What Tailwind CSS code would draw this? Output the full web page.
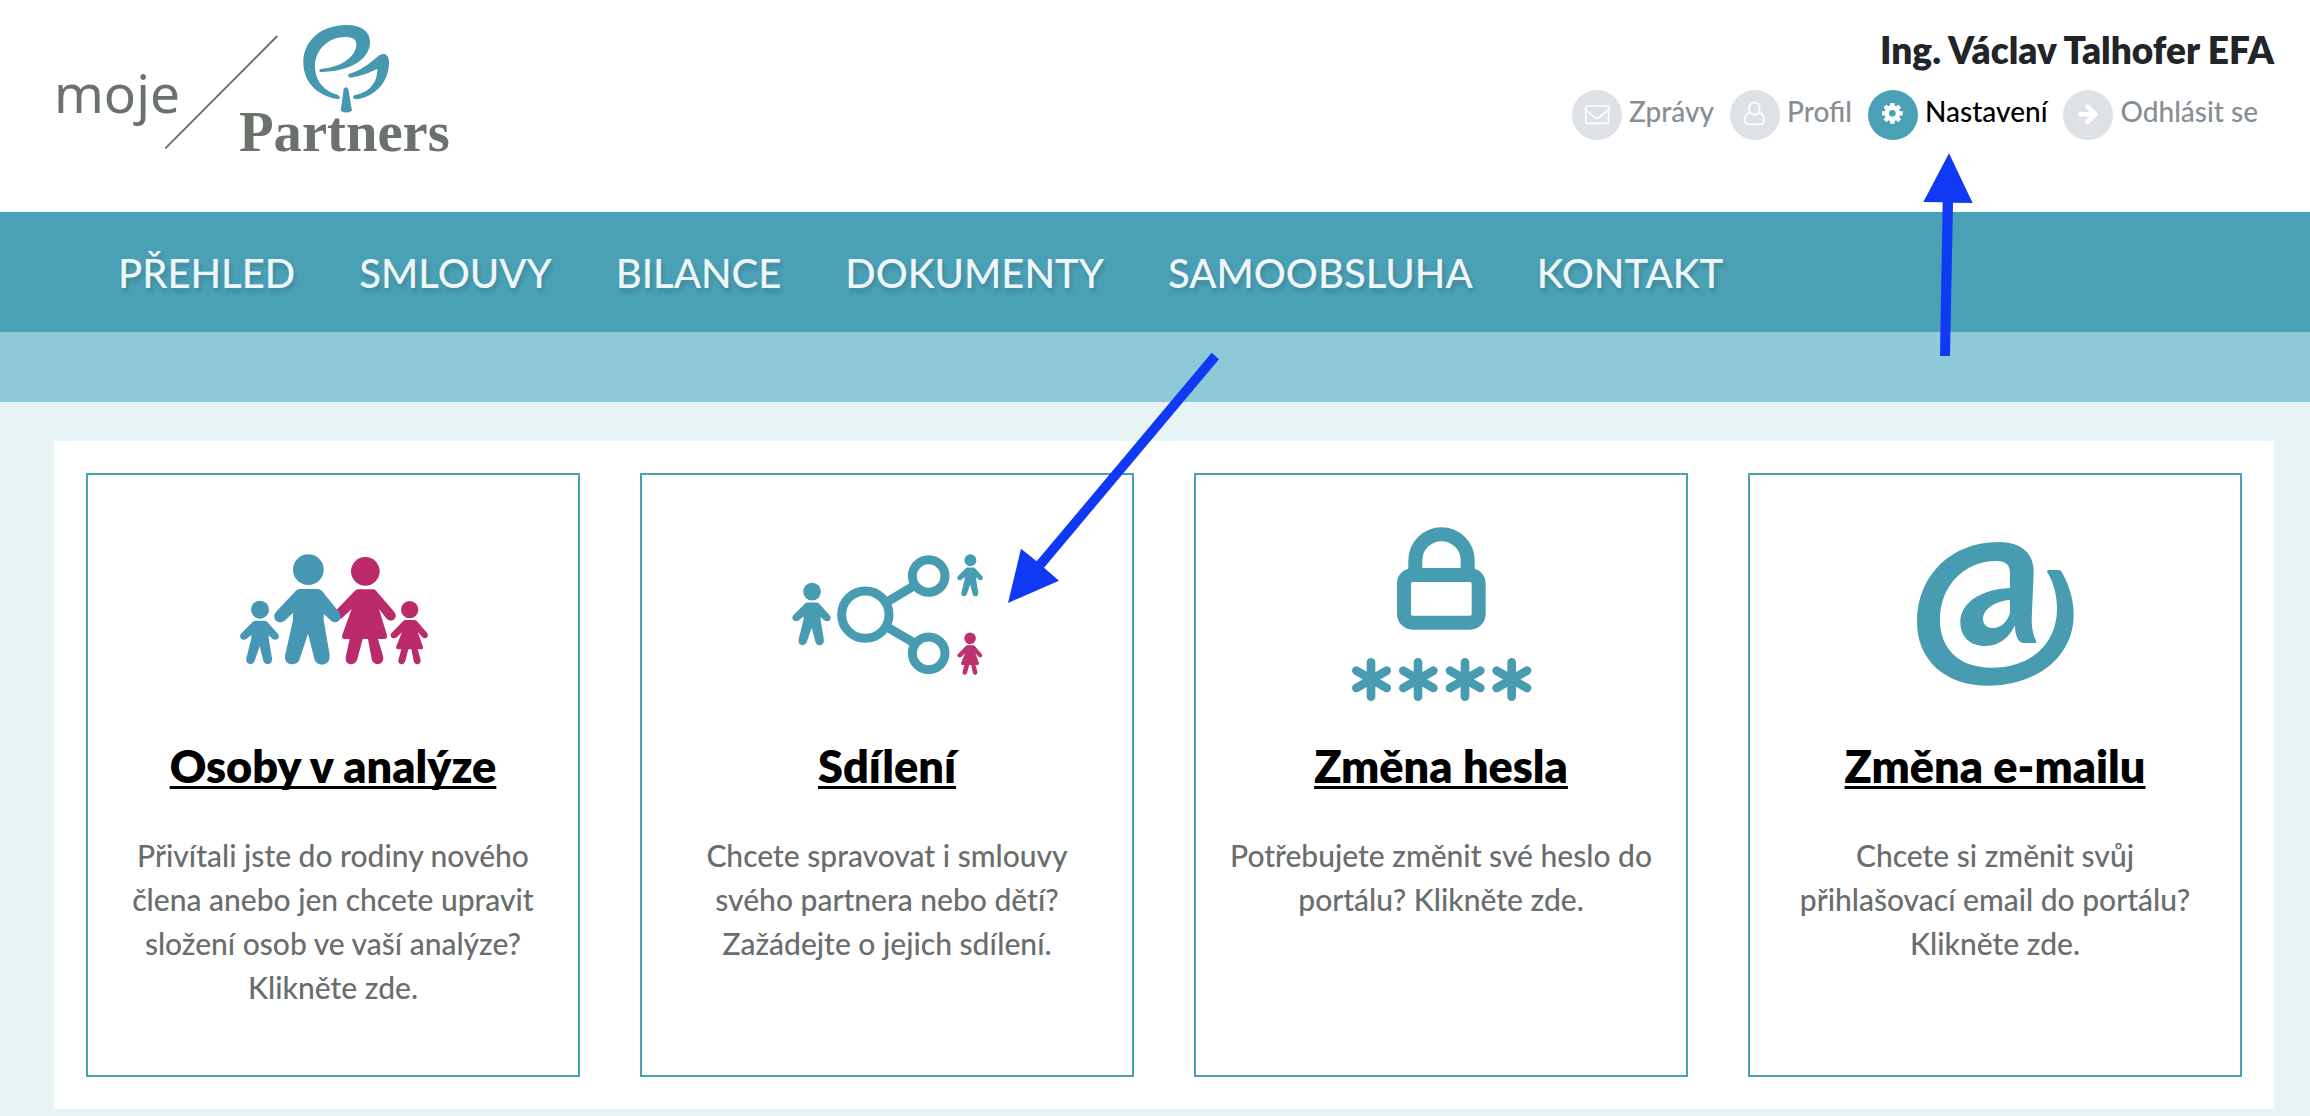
<!DOCTYPE html>
<html lang="cs">
<head>
    <meta charset="UTF-8">
    <meta name="viewport" content="width=device-width, initial-scale=1.0">
    <title>Nastavení - moje Partners</title>

    <script src="https://cdn.jsdelivr.net/npm/@tailwindcss/browser@4"></script>
</head>
<body class="min-h-screen bg-[#e6f4f5] font-['Lato',sans-serif] overflow-x-hidden">
    <!-- Header -->
    <header class="bg-white flex justify-between items-start pl-10 pr-9 pb-[42px]">
        <a href="#" class="block pt-[10px]" aria-label="moje Partners">
            <svg class="w-[420px] h-40" viewBox="0 0 1260 480">
                <text x="42" y="309" font-size="160" fill="#6b726c" class="font-['Noto_Sans',sans-serif]">moje</text>
                <line x1="376" y1="415" x2="712" y2="78" stroke="#6b726c" stroke-width="6"/>
                <text x="597" y="423" font-size="170" fill="#6b726c" class="font-['Liberation_Serif',serif] font-bold">Partners</text>
                <g fill="#4697b0">
                    <path d="M895 268C830 258 790 215 790 157C790 95 840 45 920 45C965 45 990 65 990 97C990 150 925 186 842 186Q833 181 842 177C905 172 949 140 949 103C949 88 937 81 915 81C865 81 825 120 825 168C825 215 855 245 893 254Q905 262 895 268Z"/>
                    <path d="M926 192C965 182 995 155 1015 138C1030 127 1047 130 1047 158C1047 215 1005 262 946 268Q933 262 944 255C985 248 1013 220 1012 176C990 188 960 198 932 203Q920 200 926 192Z"/>
                    <path d="M911 238Q918 225 925 238L936 302Q918 313 902 302Z"/>
                </g>
            </svg>
        </a>

        <div class="pt-7">
            <div class="text-right text-[37px] leading-[44px] font-extrabold text-[#212529]">Ing. Václav Talhofer EFA</div>
            <ul class="flex justify-end gap-4 pr-4 mt-[18px] text-[28px] leading-[42px] font-medium text-[#868e96]">
                <li>
                    <a href="#" class="flex gap-[7px]">
                        <svg class="size-[50px]" viewBox="0 0 150 150" fill="none" stroke="#fff" stroke-width="5" stroke-linejoin="round">
                            <circle cx="75" cy="75" r="75" fill="#dee2e6" stroke="none"/>
                            <rect x="41" y="48" width="69" height="52" rx="4"/>
                            <path d="M42 60L68 82Q75 88 82 82L109 60"/>
                        </svg>
                        Zprávy
                    </a>
                </li>
                <li>
                    <a href="#" class="flex gap-[7px]">
                        <svg class="size-[50px]" viewBox="0 0 150 150" fill="none" stroke="#fff" stroke-width="5">
                            <circle cx="75" cy="75" r="75" fill="#dee2e6" stroke="none"/>
                            <ellipse cx="73" cy="56" rx="16" ry="19"/>
                            <path d="M60 68C48 70 44 80 44 92Q45 103 56 103H90Q101 103 102 92C102 80 98 70 86 68"/>
                        </svg>
                        Profil
                    </a>
                </li>
                <li class="relative">
                    <a href="#" class="flex gap-[7px] text-black">
                        <svg class="size-[50px]" viewBox="0 0 150 150">
                            <circle cx="75" cy="75" r="75" fill="#4aa0b5"/>
                            <g stroke="#fff" stroke-width="13">
                                <path d="M73 39V101M42 70H104M51 48L95 92M51 92L95 48"/>
                            </g>
                            <circle cx="73" cy="70" r="17" fill="#4aa0b5" stroke="#fff" stroke-width="14"/>
                        </svg>
                        Nastavení
                    </a>
                    <!-- Arrow to "Nastavení" -->
                    <svg class="absolute z-10 left-[52px] top-[60px] w-[60px] h-[210px] pointer-events-none" viewBox="90 60 180 630">
                        <path d="M177 70L248 219L189 218L180 678H150L158 217L100 216Z" fill="#1039f5"/>
                    </svg>
                </li>
                <li>
                    <a href="#" class="flex gap-[7px]">
                        <svg class="size-[50px]" viewBox="0 0 150 150" fill="none" stroke="#fff" stroke-width="14" stroke-linecap="round" stroke-linejoin="round">
                            <circle cx="75" cy="75" r="75" fill="#dee2e6" stroke="none"/>
                            <path d="M52 73H96M73 50L97 73L73 96"/>
                        </svg>
                        Odhlásit se
                    </a>
                </li>
            </ul>
        </div>
    </header>

    <!-- Main menu -->
    <nav class="bg-[#4aa0b5] h-[120px] pt-[2px] pl-[118px] flex items-center gap-16 text-[40px] font-medium text-[#eff6f8] text-shadow-[2px_4px_4px_rgb(0_0_0/0.15)]">
        <a href="#">PŘEHLED</a>
        <a href="#">SMLOUVY</a>
        <a href="#">BILANCE</a>
        <a href="#">DOKUMENTY</a>
        <a href="#">SAMOOBSLUHA</a>
        <a href="#">KONTAKT</a>
    </nav>
    <div class="bg-[#8ec9d7] h-[70px]"></div>

    <!-- Settings cards -->
    <main class="mt-[39px] ml-[54px] mr-9 p-8 bg-white grid grid-cols-4 gap-[60px] text-center [font-variant-ligatures:none]">
        <section class="border-2 border-[#4aa0b5] px-[30px] pt-[35px] pb-[66px]">
            <svg class="size-[200px] mx-auto" viewBox="39 -90 600 600">
                <defs>
                    <g id="boy">
                        <circle cx="120" cy="209" r="27"/>
                        <path d="M106 242H133Q138 242 142 246L174 282Q180 290 173 297Q166 302 158 297L146 286V295L156 355Q157 371 143 373Q133 372 130 362L119 319L104 362Q99 373 89 372Q77 369 79 355L94 295V285L79 297Q71 302 63 296Q57 288 63 281L98 246Q102 242 106 242Z"/>
                    </g>
                    <g id="girl">
                        <circle cx="569" cy="209" r="26"/>
                        <path d="M556 240H583Q588 240 591 244L622 280Q626 288 620 293Q613 297 607 291L593 276L609 320Q610 328 603 328H593L602 360Q602 372 592 373Q583 372 581 362L574 328H565L556 362Q553 373 544 373Q534 371 535 360L544 328H534Q527 327 529 319L546 276L531 291Q523 297 515 293Q509 287 514 280L549 244Q552 240 556 240Z"/>
                    </g>
                </defs>
                <g fill="#bb2a6b">
                    <circle cx="436" cy="94" r="43"/>
                    <path d="M414 148H460Q465 148 468 152L523 216Q532 228 523 238Q513 246 501 238L477 207L501 286Q503 297 493 297H474L490 352Q491 372 472 373Q459 372 455 358L444 297H428L412 358Q407 373 391 373Q375 370 377 352L389 297H373Q364 296 367 284L395 207L362 238L349 210L405 152Q409 148 414 148Z"/>
                    <use href="#girl"/>
                </g>
                <g fill="#4697b3">
                    <circle cx="265" cy="89" r="46"/>
                    <path d="M240 147H292Q300 147 306 153L357 216Q366 228 359 240Q349 251 335 244L311 222V240L329 345Q331 372 306 374Q291 374 284 360L264 281L238 360Q230 374 214 373Q193 370 195 347L219 240V219L193 243Q180 251 168 242Q157 230 167 217L227 153Q232 147 240 147Z"/>
                    <use href="#boy"/>
                </g>
            </svg>
            <h2 class="mt-7 text-[45px] leading-[56px] font-extrabold text-black">
                <a href="#" class="underline decoration-[3px] underline-offset-[3px] [text-decoration-skip-ink:none]">Osoby v analýze</a>
            </h2>
            <p class="mt-[39px] text-[30px] leading-[44px] font-medium text-[#696d6b]">Přivítali jste do rodiny nového člena anebo jen chcete upravit složení osob ve vaší analýze? Klikněte zde.</p>
        </section>

        <section class="relative border-2 border-[#4aa0b5] px-[30px] pt-[35px] pb-[66px]">
            <svg class="size-[200px] mx-auto" viewBox="21 -90 600 600" fill="#489cb2">
                <use href="#boy" transform="translate(-22 -51) scale(.985)"/>
                <use href="#boy" transform="translate(492 -77) scale(.66)"/>
                <use href="#girl" transform="translate(189 155) scale(.67)" fill="#bf3071"/>
                <g fill="none" stroke="#489cb2" stroke-width="27">
                    <circle cx="256" cy="224" r="71"/>
                    <circle cx="446" cy="108" r="49"/>
                    <circle cx="446" cy="340" r="49"/>
                    <path d="M314 190L408 134M314 257L408 312"/>
                </g>
            </svg>
            <h2 class="mt-7 text-[45px] leading-[56px] font-extrabold text-black">
                <a href="#" class="underline decoration-[3px] underline-offset-[3px] [text-decoration-skip-ink:none]">Sdílení</a>
            </h2>
            <p class="mt-[39px] text-[30px] leading-[44px] font-medium text-[#696d6b]">Chcete spravovat i smlouvy svého partnera nebo dětí? Zažádejte o jejich sdílení.</p>
            <!-- Arrow to "Sdílení" -->
            <svg class="absolute z-10 left-[338px] -top-[145px] w-[260px] h-[300px] pointer-events-none" viewBox="0 0 780 900">
                <path d="M84 819L123 656L170 694L695 68L717 88L192 713L237 752Z" fill="#1039f5"/>
            </svg>
        </section>

        <section class="border-2 border-[#4aa0b5] px-[30px] pt-[35px] pb-[66px]">
            <svg class="size-[200px] mx-auto" viewBox="3 0 600 600" fill="none" stroke="#489cb2">
                <g stroke-width="42">
                    <path d="M226 190V151A78 78 0 0 1 383 151V190"/>
                    <rect x="192" y="195" width="224" height="143" rx="26"/>
                </g>
                <g stroke-width="26" stroke-linecap="round">
                    <path d="M93 457V560M49 482L140 534M49 534L140 482"/>
                    <path d="M234 457V560M190 482L280 534M190 534L280 482"/>
                    <path d="M375 457V560M330 482L421 534M330 534L421 482"/>
                    <path d="M515 457V560M470 482L561 534M470 534L561 482"/>
                </g>
            </svg>
            <h2 class="mt-7 text-[45px] leading-[56px] font-extrabold text-black">
                <a href="#" class="underline decoration-[3px] underline-offset-[3px] [text-decoration-skip-ink:none]">Změna hesla</a>
            </h2>
            <p class="mt-[39px] text-[30px] leading-[44px] font-medium text-[#696d6b]">Potřebujete změnit své heslo do portálu? Klikněte zde.</p>
        </section>

        <section class="border-2 border-[#4aa0b5] px-[30px] pt-[35px] pb-[66px]">
            <svg class="size-[200px] mx-auto" viewBox="15 -30 600 600" fill="#489cb2">
                <path fill-rule="evenodd" d="M437 369H400C384 369 375 345 375 316C358 352 330 378 285 378C240 378 211 350 211 306C211 250 270 208 360 204V160C360 132 345 123 318 123C225 123 150 195 150 300C150 390 210 443 305 443C420 443 501 375 501 265C501 225 490 185 471 155Q471 150 476 150H508Q512 150 515 155C537 195 551 235 551 285C551 410 440 497 295 497C165 497 81 420 81 305C81 165 185 66 325 66C395 66 431 100 431 155L425 300C425 325 430 345 438 362Q440 369 437 369ZM360 239C310 245 279 270 279 297C279 314 291 324 308 324C335 324 353 303 360 278Z"/>
            </svg>
            <h2 class="mt-7 text-[45px] leading-[56px] font-extrabold text-black">
                <a href="#" class="underline decoration-[3px] underline-offset-[3px] [text-decoration-skip-ink:none]">Změna e-mailu</a>
            </h2>
            <p class="mt-[39px] text-[30px] leading-[44px] font-medium text-[#696d6b]">Chcete si změnit svůj přihlašovací email do portálu? Klikněte zde.</p>
        </section>
    </main>
</body>
</html>
